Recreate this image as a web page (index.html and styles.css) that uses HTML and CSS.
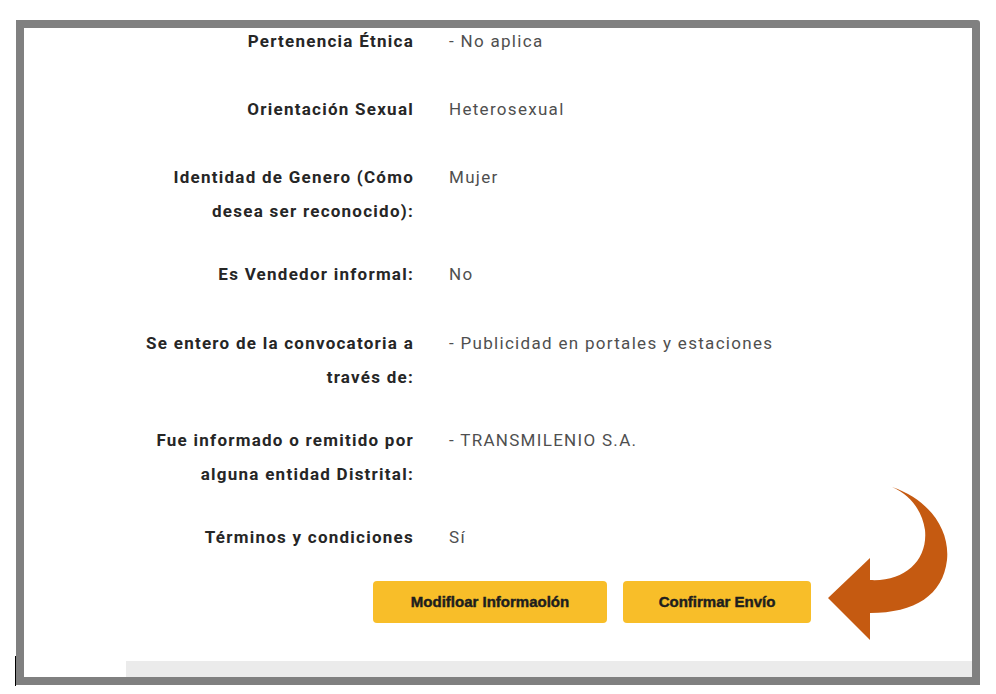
FILE: index.html
```html
<!DOCTYPE html>
<html lang="es">
<head>
<meta charset="utf-8">
<title>Resumen</title>
<link rel="stylesheet" href="styles.css">
</head>
<body>
<div class="page">
  <div class="frame">
    <div class="content">
      <div class="rows">
        <div class="row"><div class="label">Pertenencia Étnica</div><div class="value">- No aplica</div></div>
        <div class="row"><div class="label">Orientación Sexual</div><div class="value">Heterosexual</div></div>
        <div class="row"><div class="label">Identidad de Genero (Cómo desea ser reconocido):</div><div class="value">Mujer</div></div>
        <div class="row"><div class="label">Es Vendedor informal:</div><div class="value">No</div></div>
        <div class="row"><div class="label">Se entero de la convocatoria a través de:</div><div class="value">- Publicidad en portales y estaciones</div></div>
        <div class="row"><div class="label">Fue informado o remitido por alguna entidad Distrital:</div><div class="value">- TRANSMILENIO S.A.</div></div>
        <div class="row"><div class="label">Términos y condiciones</div><div class="value">Sí</div></div>
      </div>
      <div class="actions">
        <button class="btn btn-edit">Modifloar Informaolón</button>
        <button class="btn btn-confirm">Confirmar Envío</button>
      </div>
      <div class="footer-bar"></div>
    </div>
  </div>
  <div class="cursor-line"></div>
  <svg class="arrow" width="996" height="694" viewBox="0 0 996 694" aria-hidden="true">
    <path d="M892 487 C930 500 950 530 947 560 C943 595 915 613 870 613 L870 640 L828 598 L870 558 L870 580 C905 582 928 560 925 530 C922 510 910 495 892 487 Z" fill="#c55a11"/>
  </svg>
</div>
</body>
</html>
```
FILE: styles.css
```css
html, body {
  margin: 0;
  padding: 0;
  background: #ffffff;
}
.page {
  position: relative;
  width: 996px;
  height: 694px;
  overflow: hidden;
  padding-top: 20px;
  padding-left: 16px;
  box-sizing: border-box;
}
.frame {
  width: 964px;
  height: 665px;
  border: 8px solid #808080;
  border-top-right-radius: 3px;
  box-sizing: border-box;
  overflow: hidden;
  background: #ffffff;
}
.content {
  margin-top: -4.5px;
  font-family: Roboto, "Liberation Sans", sans-serif;
  font-size: 17px;
  line-height: 34px;
}
.rows {
  display: flex;
  flex-direction: column;
}
.row {
  display: grid;
  grid-template-columns: 390px 1fr;
  column-gap: 35px;
  min-height: 39.4px;
  margin-bottom: 29px;
}
.row:last-child {
  margin-bottom: 0;
}
.label {
  padding-left: 112px;
  text-align: right;
  font-weight: 700;
  color: #262626;
  letter-spacing: 1.25px;
}
.value {
  color: #4f4f4f;
  letter-spacing: 1.3px;
}
.actions {
  display: flex;
  gap: 16px;
  padding-left: 349px;
  margin-top: 21.5px;
}
.btn {
  height: 42px;
  border: none;
  border-radius: 4px;
  background: #f8be29;
  color: #1e1e1e;
  font-family: "Liberation Sans", Arial, sans-serif;
  font-weight: 700;
  font-size: 15px;
  letter-spacing: 0;
  -webkit-text-stroke: 0.45px #1e1e1e;
  padding: 0;
}
.btn-edit {
  width: 234px;
}
.btn-confirm {
  width: 188px;
}
.footer-bar {
  margin-top: 38px;
  margin-left: 102px;
  height: 20px;
  background: #ebebeb;
}
.cursor-line {
  position: absolute;
  left: 15px;
  top: 656px;
  width: 1px;
  height: 30px;
  background: #000000;
}
.arrow {
  position: absolute;
  left: 0;
  top: 0;
  pointer-events: none;
}
```
